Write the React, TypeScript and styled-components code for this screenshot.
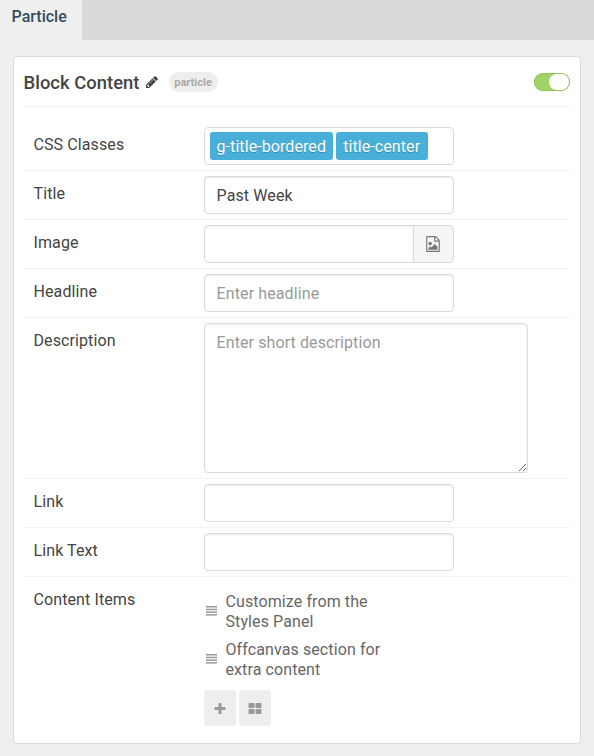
import React from "react";
import styled, { createGlobalStyle } from "styled-components";

const GlobalStyle = createGlobalStyle`
  *, *::before, *::after { box-sizing: border-box; }
  html, body { margin: 0; background: #efefef; }
  body, input, textarea, button { font-family: Roboto, "Liberation Sans", sans-serif; }
`;

const Page = styled.main`
  height: 756px;
  overflow: hidden;
  background: #efefef;
  color: #444;
  font-size: 16px;
  line-height: 20px;
`;

const TabBar = styled.nav`
  display: flex;
  height: 40px;
  background: #dadada;
`;

const Tab = styled.a`
  width: 82px;
  padding: 7px 0 0 11.5px;
  background: #efefef;
  color: #314d59;
  font-weight: 500;
  white-space: nowrap;
`;

const Card = styled.section`
  width: 568px;
  height: 688px;
  margin: 16px 0 0 13px;
  padding: 0 10px;
  border: 1px solid #dadada;
  border-radius: 4px;
  background: #fff;
`;

const CardHeader = styled.header`
  display: flex;
  align-items: center;
  height: 50px;
  margin-bottom: 15px;
  border-bottom: 1px solid #eee;
`;

const CardTitle = styled.h4`
  margin: 0 0 0 -0.5px;
  padding-top: 2px;
  font-size: 18.4px;
  font-weight: 500;
  line-height: 24px;
  letter-spacing: 0.04px;
`;

const EditButton = styled.span`
  display: flex;
  margin-left: 5.5px;
  padding-top: 1px;
`;

const Badge = styled.span`
  margin-left: 9.5px;
  width: 49px;
  height: 20px;
  border-radius: 10px;
  background: #eee;
  color: #aaa;
  font-size: 11px;
  font-weight: 700;
  line-height: 21px;
  text-align: center;
`;

const Toggle = styled.span`
  display: flex;
  justify-content: flex-end;
  width: 36px;
  height: 18px;
  margin-left: auto;
  padding: 1px;
  border-radius: 9px;
  background: #a0d468;
  box-shadow: inset 0 0 0 1px #8fc656;
`;

const Knob = styled.span`
  width: 20px;
  height: 16px;
  border-radius: 8px;
  background: #fff;
`;

const Row = styled.div<{ $last?: boolean }>`
  display: flex;
  align-items: flex-start;
  padding: 5px 0 5px 9.5px;
  border-bottom: ${(p) => (p.$last ? "0" : "1px solid #f3f3f3")};
`;

const Label = styled.label`
  flex: 0 0 170.5px;
  padding-top: 8px;
  letter-spacing: 0.1px;
`;

const Input = styled.input`
  width: 250px;
  height: 38px;
  padding: 0 11.5px;
  border: 1px solid #dadada;
  border-radius: 4px;
  outline: 0;
  background: #fff;
  box-shadow: inset 0 1px 2px rgba(0, 0, 0, 0.08);
  color: #444;
  font-size: 16px;
  letter-spacing: 0.12px;
  &::placeholder { color: #999; opacity: 1; }
`;

const TextArea = styled.textarea`
  display: block;
  width: 324px;
  height: 150px;
  padding: 9px 11.5px;
  border: 1px solid #dadada;
  border-radius: 4px;
  outline: 0;
  background: #fff;
  box-shadow: inset 0 1px 2px rgba(0, 0, 0, 0.08);
  color: #444;
  font-size: 16px;
  line-height: 20px;
  letter-spacing: 0.1px;
  &::placeholder { color: #999; opacity: 1; }
`;

const TagBox = styled.div`
  display: flex;
  gap: 3px;
  width: 250px;
  height: 38px;
  padding: 4px 5px;
  border: 1px solid #dadada;
  border-radius: 4px;
`;

const Tag = styled.span<{ $width: number; $indent: number }>`
  width: ${(p) => p.$width}px;
  height: 28px;
  padding-left: ${(p) => p.$indent}px;
  border-radius: 3px;
  background: #48afd9;
  color: #fff;
  line-height: 29px;
  letter-spacing: 0.08px;
  text-shadow: 0 1px 0 rgba(0, 51, 83, 0.3);
  white-space: nowrap;
`;

const InputGroup = styled.div`
  display: flex;
`;

const GroupInput = styled(Input)`
  width: 210px;
  border-radius: 4px 0 0 4px;
`;

const GroupButton = styled.button`
  display: flex;
  align-items: center;
  justify-content: center;
  width: 41px;
  height: 38px;
  margin-left: -1px;
  padding: 0 2px 0 0;
  border: 1px solid #dadada;
  border-radius: 0 4px 4px 0;
  background: #f5f5f5;
`;

const Collection = styled.div`
  width: 200px;
  padding-top: 10px;
`;

const Item = styled.div`
  display: flex;
  align-items: center;
  gap: 8.5px;
  margin-bottom: 8px;
  padding-left: 2px;
  color: #666;
`;

const HandleIcon = styled.svg`
  flex: none;
  margin-bottom: 2px;
`;

const ItemText = styled.span`
  width: 160px;
  letter-spacing: 0.1px;
`;

const Actions = styled.div`
  display: flex;
  gap: 3px;
  padding-top: 2px;
`;

const ActionButton = styled.button`
  display: flex;
  align-items: center;
  justify-content: center;
  width: 32px;
  height: 36px;
  padding: 2px 0 0;
  border: 0;
  border-radius: 3px;
  background: #eee;
`;

type IconProps = { size: number; color: string; d: string };
const Icon = ({ size, color, d }: IconProps) => (
  <svg width={size} height={size} viewBox="0 0 1792 1792" fill={color}>
    <path d={d} />
  </svg>
);

const PENCIL =
  "M491 1536l91-91-235-235-91 91v107h128v128h107zm523-928q0-22-22-22-10 0-17 7l-542 542q-7 7-7 17 0 22 22 22 10 0 17-7l542-542q7-7 7-17zm-54-192l416 416-832 832h-416v-416zm683 96q0 53-37 90l-166 166-416-416 166-165q36-38 90-38 53 0 91 38l235 234q37 39 37 91z";
const PLUS =
  "M1600 736v192q0 40-28 68t-68 28h-416v416q0 40-28 68t-68 28h-192q-40 0-68-28t-28-68v-416h-416q-40 0-68-28t-28-68v-192q0-40 28-68t68-28h416v-416q0-40 28-68t68-28h192q40 0 68 28t28 68v416h416q40 0 68 28t28 68z";
const GRID =
  "M832 1024v384q0 52-38 90t-90 38h-512q-52 0-90-38t-38-90v-384q0-52 38-90t90-38h512q52 0 90 38t38 90zm0-768v384q0 52-38 90t-90 38h-512q-52 0-90-38t-38-90v-384q0-52 38-90t90-38h512q52 0 90 38t38 90zm896 768v384q0 52-38 90t-90 38h-512q-52 0-90-38t-38-90v-384q0-52 38-90t90-38h512q52 0 90 38t38 90zm0-768v384q0 52-38 90t-90 38h-512q-52 0-90-38t-38-90v-384q0-52 38-90t90-38h512q52 0 90 38t38 90z";
const FILE_IMAGE =
  "M1596 380q28 28 48 76t20 88v1152q0 40-28 68t-68 28h-1344q-40 0-68-28t-28-68v-1600q0-40 28-68t68-28h896q40 0 88 20t76 48zm-444-244v376h376q-10-29-22-41l-313-313q-12-12-41-22zm384 1528v-1024h-416q-40 0-68-28t-28-68v-416h-768v1536h1280zm-128-448v320h-1024v-192l192-192 128 128 384-384zm-832-192q-80 0-136-56t-56-136 56-136 136-56 136 56 56 136-56 136-136 56z";

const DragHandle = () => (
  <HandleIcon width="11" height="10" viewBox="0 0 11 10" fill="#999">
    {[0, 2.7, 5.4, 8.1].map((y) => (
      <rect key={y} x="0" y={y} width="11" height="1.5" />
    ))}
  </HandleIcon>
);

const items = ["Customize from the Styles Panel", "Offcanvas section for extra content"];

export default function App() {
  return (
    <>
      <GlobalStyle />
      <Page>
        <TabBar>
          <Tab>Particle</Tab>
        </TabBar>
        <Card>
          <CardHeader>
            <CardTitle>Block Content</CardTitle>
            <EditButton>
              <Icon size={14} color="#444" d={PENCIL} />
            </EditButton>
            <Badge>particle</Badge>
            <Toggle>
              <Knob />
            </Toggle>
          </CardHeader>
          <Row>
            <Label>CSS Classes</Label>
            <TagBox>
              <Tag $width={123} $indent={6.5}>g-title-bordered</Tag>
              <Tag $width={92} $indent={7.2}>title-center</Tag>
            </TagBox>
          </Row>
          <Row>
            <Label>Title</Label>
            <Input defaultValue="Past Week" />
          </Row>
          <Row>
            <Label>Image</Label>
            <InputGroup>
              <GroupInput />
              <GroupButton>
                <Icon size={16} color="#777" d={FILE_IMAGE} />
              </GroupButton>
            </InputGroup>
          </Row>
          <Row>
            <Label>Headline</Label>
            <Input placeholder="Enter headline" />
          </Row>
          <Row>
            <Label>Description</Label>
            <TextArea placeholder="Enter short description" />
          </Row>
          <Row>
            <Label>Link</Label>
            <Input />
          </Row>
          <Row>
            <Label>Link Text</Label>
            <Input />
          </Row>
          <Row $last>
            <Label>Content Items</Label>
            <Collection>
              {items.map((text) => (
                <Item key={text}>
                  <DragHandle />
                  <ItemText>{text}</ItemText>
                </Item>
              ))}
              <Actions>
                <ActionButton>
                  <Icon size={14} color="#999" d={PLUS} />
                </ActionButton>
                <ActionButton>
                  <Icon size={14} color="#999" d={GRID} />
                </ActionButton>
              </Actions>
            </Collection>
          </Row>
        </Card>
      </Page>
    </>
  );
}
